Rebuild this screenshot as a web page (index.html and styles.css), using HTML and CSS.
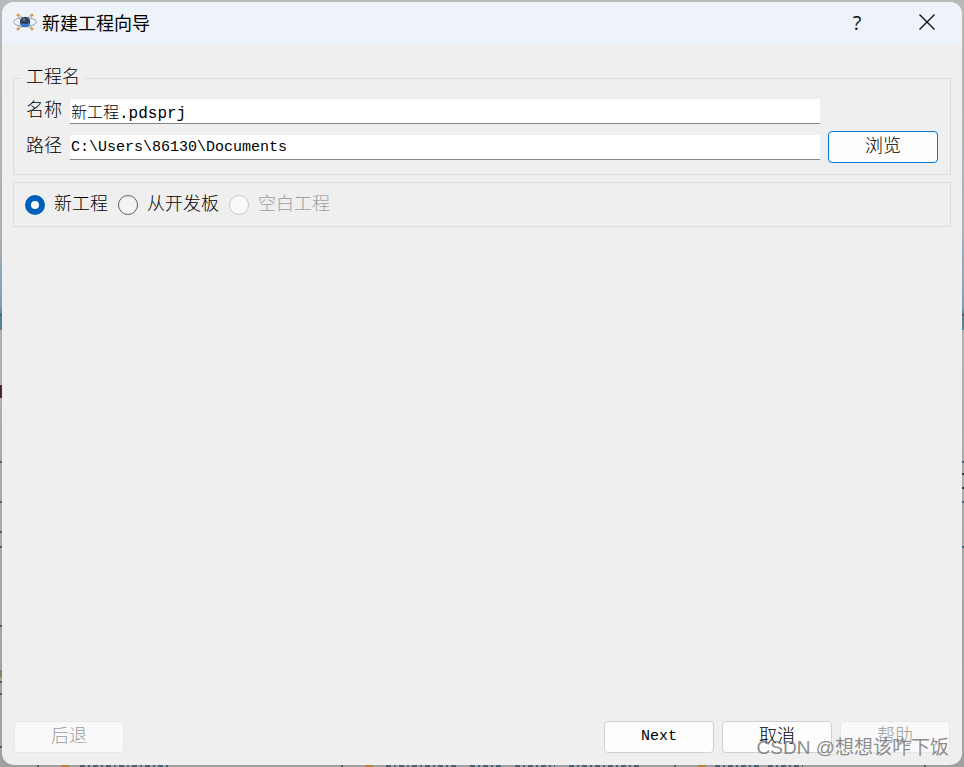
FILE: index.html
```
<!DOCTYPE html>
<html lang="zh-CN">
<head>
    <meta charset="UTF-8">
    <meta name="viewport" content="width=device-width, initial-scale=1.0">
    <title>新建工程向导</title>
    <link rel="stylesheet" href="styles.css">
</head>
<body>
    <!-- edges of the window behind the dialog -->
    <svg class="backdrop" viewBox="0 0 964 767" preserveAspectRatio="none" aria-hidden="true">
        <path d="M0 315h964M0 462h964M0 502h964M0 547h964" stroke="#485f70" stroke-width="2"/>
        <path d="M0 532h2M0 626h2M0 682h2M0 694h2M0 747h2" stroke="#485f70" stroke-width="2"/>
        <path d="M962 474h2M962 488h2" stroke="#333" stroke-width="2"/>
        <path d="M0 385h2v13H0z" fill="#4c2629"/>
        <path d="M0 670h2v7H0z" fill="#8b8061"/>
        <path d="M80 766h88M386 766h72M470 766h34M515 766h40M569 766h73M715 766h45M768 766h35" stroke="#4b6174" stroke-width="2" stroke-dasharray="5 3 2 3"/>
        <path d="M37 766h2M341 766h2M674 766h2M924 766h2" stroke="#485f70" stroke-width="2"/>
        <path d="M61 766h8M365 766h8M698 766h8" stroke="#b18635" stroke-width="2"/>
    </svg>
    <form class="dialog">
        <header class="titlebar">
            <svg class="app-icon" viewBox="0 0 24 24" aria-hidden="true">
                <g fill="none" stroke="#9a9da5">
                    <ellipse cx="12" cy="12" rx="11.3" ry="4.5"/>
                    <path d="M5 5c4 1 12 8 14 14M19 5C15 6 7 13 5 19M5 5c1 5 9 12 14 14M19 5c-1 5-9 12-14 14" stroke-width=".8"/>
                </g>
                <circle cx="12" cy="12" r="5.2" fill="#34435e"/>
                <path d="M7 13q5 2 10 0a5.2 5.2 0 0 1-10 0z" fill="#397fd8"/>
                <circle cx="11" cy="9.5" r="1.5" fill="#66758e"/>
                <g fill="#d39b45">
                    <circle cx="5" cy="5" r="1.5"/>
                    <circle cx="19" cy="5" r="1.5"/>
                    <circle cx="5" cy="19" r="1.5"/>
                    <circle cx="19" cy="19" r="1.5"/>
                </g>
            </svg>
            <h1>新建工程向导</h1>
            <button type="button" class="window-button help-button">?</button>
            <button type="button" class="window-button" aria-label="关闭">
                <svg class="close-icon" viewBox="0 0 16 16"><path d="M.5.5l15 15M15.5.5l-15 15"/></svg>
            </button>
        </header>
        <main class="content">
            <fieldset class="group project">
                <legend>工程名</legend>
                <label for="name">名称</label>
                <input type="text" id="name" class="name-input" value="新工程.pdsprj">
                <label for="path">路径</label>
                <input type="text" id="path" value="C:\Users\86130\Documents">
                <button type="button" class="button browse">浏览</button>
            </fieldset>
            <div class="group options">
                <label><input type="radio" name="kind" checked>新工程</label>
                <label><input type="radio" name="kind">从开发板</label>
                <label class="disabled"><input type="radio" name="kind" disabled>空白工程</label>
            </div>
        </main>
        <footer class="actions">
            <button type="button" class="button back" disabled>后退</button>
            <button type="button" class="button next">Next</button>
            <button type="button" class="button">取消</button>
            <button type="button" class="button" disabled>帮助</button>
        </footer>
    </form>
    <div class="watermark">CSDN @想想该咋下饭</div>
</body>
</html>
```

FILE: styles.css
```
* {
    box-sizing: border-box;
}
body {
    margin: 0;
    height: 100vh;
    padding: 2px;
    display: flex;
    overflow: hidden;
    background: linear-gradient(#b9b9b9 0, #acb0b3 30%, #7f9db5 40%, #55838f 41%, #55838f 43%, #b0b0b0 43%, #a0a0a0 100%);
    color: #000;
    font-family: "Liberation Mono", "Noto Sans CJK SC", monospace;
    font-size: 18px;
    font-weight: 300;
}
.backdrop {
    position: absolute;
    top: 0;
    left: 0;
    width: 100%;
    height: 100%;
}
.dialog {
    position: relative;
    flex: 1;
    display: flex;
    flex-direction: column;
    overflow: hidden;
    border-radius: 12px;
    background-color: #efefef;
}
.titlebar {
    display: flex;
    align-items: center;
    height: 43px;
    padding: 0 0 3px 11px;
    background-color: #eef3fa;
}
.app-icon {
    width: 24px;
    height: 24px;
}
h1 {
    flex: 1;
    margin: 0 0 0 5px;
    font: 18px/24px "Noto Sans CJK SC", sans-serif;
}
.window-button {
    width: 70px;
    height: 40px;
    padding: 0;
    border: none;
    background: none;
    color: #111;
}
.help-button {
    font: 20px "Open Sans", sans-serif;
}
.close-icon {
    width: 16px;
    height: 16px;
    vertical-align: middle;
    fill: none;
    stroke: #111;
    stroke-width: 1.4;
}
.content {
    flex: 1;
    padding: 20px 11px 0;
}
.group {
    margin: 0;
    border: 1px solid #dcdcdc;
}
.project {
    display: grid;
    grid-template-columns: 36px 1fr 110px;
    align-items: center;
    gap: 7px;
    padding: 7px 12px 11px;
}
legend {
    margin-left: -5px;
    padding: 0 5px;
    line-height: 26px;
}
.project label {
    grid-column: 1;
    line-height: 26px;
}
input[type="text"] {
    width: 100%;
    height: 26px;
    padding: 0 1px;
    border: 1px solid #ececec;
    border-bottom-color: #868686;
    border-radius: 2px;
    outline: none;
    background-color: #fff;
    color: #000;
    font-family: inherit;
    font-size: 15px;
    font-weight: 300;
}
input.name-input {
    font-size: 16px;
}
.button {
    width: 110px;
    height: 32px;
    padding: 0;
    border: 1px solid #d0d0d0;
    border-radius: 4px;
    background-color: #fdfdfd;
    color: #000;
    font-family: inherit;
    font-size: 18px;
    font-weight: 300;
    line-height: 26px;
}
.button:disabled {
    border-color: #e8e8e8;
    background-color: #f9f9f9;
    color: #9b9b9b;
}
.browse {
    border-color: #0078d4;
}
.options {
    display: flex;
    align-items: center;
    gap: 10px;
    height: 45px;
    margin-top: 7px;
    padding: 0 11px;
}
.options label {
    display: flex;
    align-items: center;
    gap: 9px;
    line-height: 26px;
}
.options .disabled {
    color: #a0a0a0;
}
input[type="radio"] {
    appearance: none;
    width: 20px;
    height: 20px;
    margin: 0;
    border: 1px solid #5f5f5f;
    border-radius: 50%;
    background-color: #f4f4f4;
}
input[type="radio"]:checked {
    border: 6px solid #005fb8;
    background-color: #fff;
}
input[type="radio"]:disabled {
    border-color: #c8c8c8;
    background-color: #fafafa;
}
.actions {
    display: flex;
    gap: 8px;
    padding: 0 12px 12px;
}
.back {
    margin-right: auto;
}
.next {
    font-size: 15px;
}
.watermark {
    position: absolute;
    right: 15px;
    bottom: 6px;
    color: rgba(110, 110, 110, 0.8);
    font: 19px/26px "Liberation Sans", "Noto Sans CJK SC", sans-serif;
    pointer-events: none;
}
```
